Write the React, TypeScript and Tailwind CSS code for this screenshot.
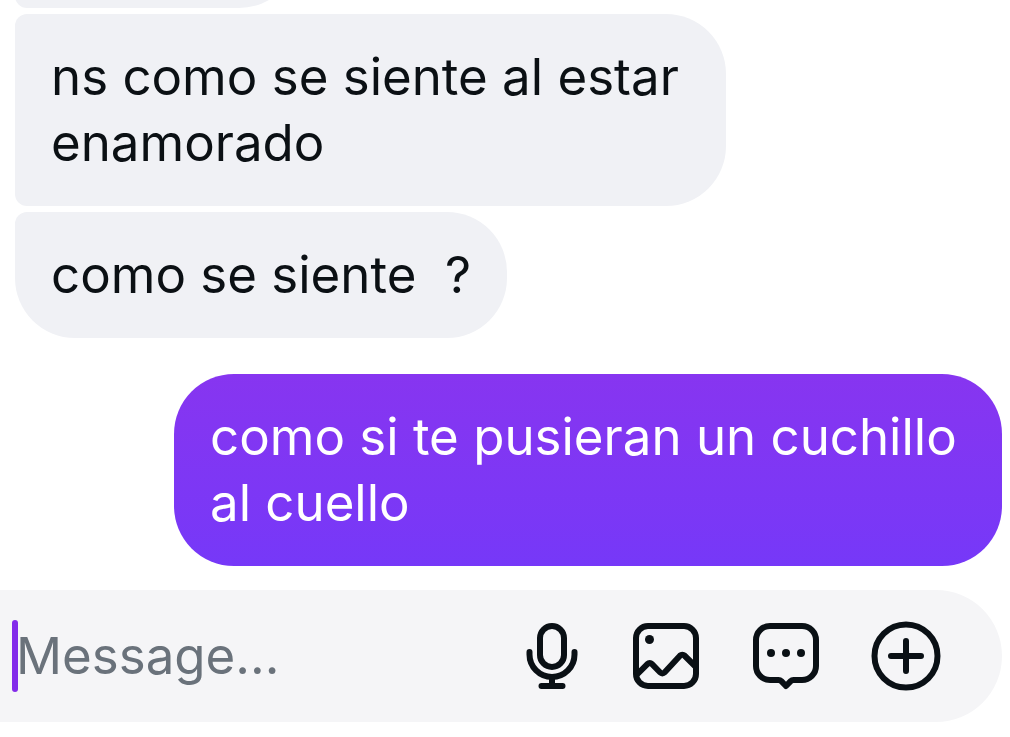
import type { ReactNode } from "react";

const shared = "px-9 py-[30px] text-[51px] leading-[66px]";

function Icon({ children }: { children: ReactNode }) {
  return (
    <svg
      viewBox="0 0 72 72"
      className="size-[72px]"
      fill="none"
      stroke="currentColor"
      strokeWidth="6"
      strokeLinecap="round"
      strokeLinejoin="round"
      aria-hidden="true"
    >
      {children}
    </svg>
  );
}

function ToolButton({ label, children }: { label: string; children: ReactNode }) {
  return (
    <button type="button" aria-label={label} className="shrink-0 text-[#0a1015]">
      <Icon>{children}</Icon>
    </button>
  );
}

export default function App() {
  return (
    <div className="overflow-hidden bg-white font-['Inter','Liberation_Sans',sans-serif] text-[#0b1014]">
      <main className="flex flex-col pr-2 pl-[15px]">
        <div className="flex h-2 items-end overflow-hidden">
          <div className="h-[126px] w-[284px] rounded-l-xl rounded-r-[60px] bg-[#f0f1f5]" />
        </div>
        <p className={`${shared} mt-1.5 w-[711px] max-w-full rounded-l-xl rounded-r-[60px] bg-[#f0f1f5]`}>
          ns como se siente al estar enamorado
        </p>
        <p
          className={`${shared} mt-1.5 self-start rounded-[60px] rounded-tl-xl bg-[#f0f1f5] whitespace-pre-wrap`}
        >
          {"como se siente  ?"}
        </p>
        <p
          className={`${shared} mt-9 w-[828px] max-w-full self-end rounded-[60px] bg-linear-to-b from-[#8735f0] to-[#7638f8] text-white`}
        >
          como si te pusieran un cuchillo al cuello
        </p>
      </main>
      <form
        className="mt-6 mr-2 flex items-center gap-12 rounded-r-full bg-[#f5f5f7] py-[30px] pr-[60px] pl-3"
        onSubmit={(event) => event.preventDefault()}
      >
        <div className="flex min-w-0 flex-1 items-center">
          <span className="h-[72px] w-1.5 shrink-0 rounded-full bg-[#832bea]" />
          <input
            type="text"
            aria-label="Message"
            placeholder="Message..."
            className="-ml-0.5 h-[72px] w-full min-w-0 bg-transparent text-[51px] caret-[#832bea] outline-none placeholder:text-[#6a727b]"
          />
        </div>
        <ToolButton label="Record voice message">
          <rect x="30" y="6" width="24" height="41" rx="12" />
          <path d="M19.5 32v2.5a22.5 22.5 0 0 0 45 0V32M42 57v9M31.5 66h21" />
        </ToolButton>
        <ToolButton label="Send photo">
          <rect x="6" y="6" width="60" height="60" rx="12" />
          <circle cx="19.5" cy="19.5" r="4.5" fill="currentColor" stroke="none" />
          <path
            strokeLinecap="butt"
            d="M6 55.5 17.6 43.9a3 3 0 0 1 4.2 0l8.4 8.6a3 3 0 0 0 4.3 0L50.2 35.5a3 3 0 0 1 4.2 0L66 47"
          />
        </ToolButton>
        <ToolButton label="Stickers">
          <path d="M20 6h32a14 14 0 0 1 14 14v26a14 14 0 0 1-14 14h-8.5a4 4 0 0 0-2.8 1.2L36 66l-4.7-4.8a4 4 0 0 0-2.8-1.2H20A14 14 0 0 1 6 46V20A14 14 0 0 1 20 6Z" />
          <g fill="currentColor" stroke="none">
            <circle cx="21" cy="33" r="4" />
            <circle cx="36" cy="33" r="4" />
            <circle cx="51" cy="33" r="4" />
          </g>
        </ToolButton>
        <ToolButton label="More options">
          <circle cx="36" cy="36" r="31.5" />
          <path d="M36 21v30M21 36h30" />
        </ToolButton>
      </form>
    </div>
  );
}
